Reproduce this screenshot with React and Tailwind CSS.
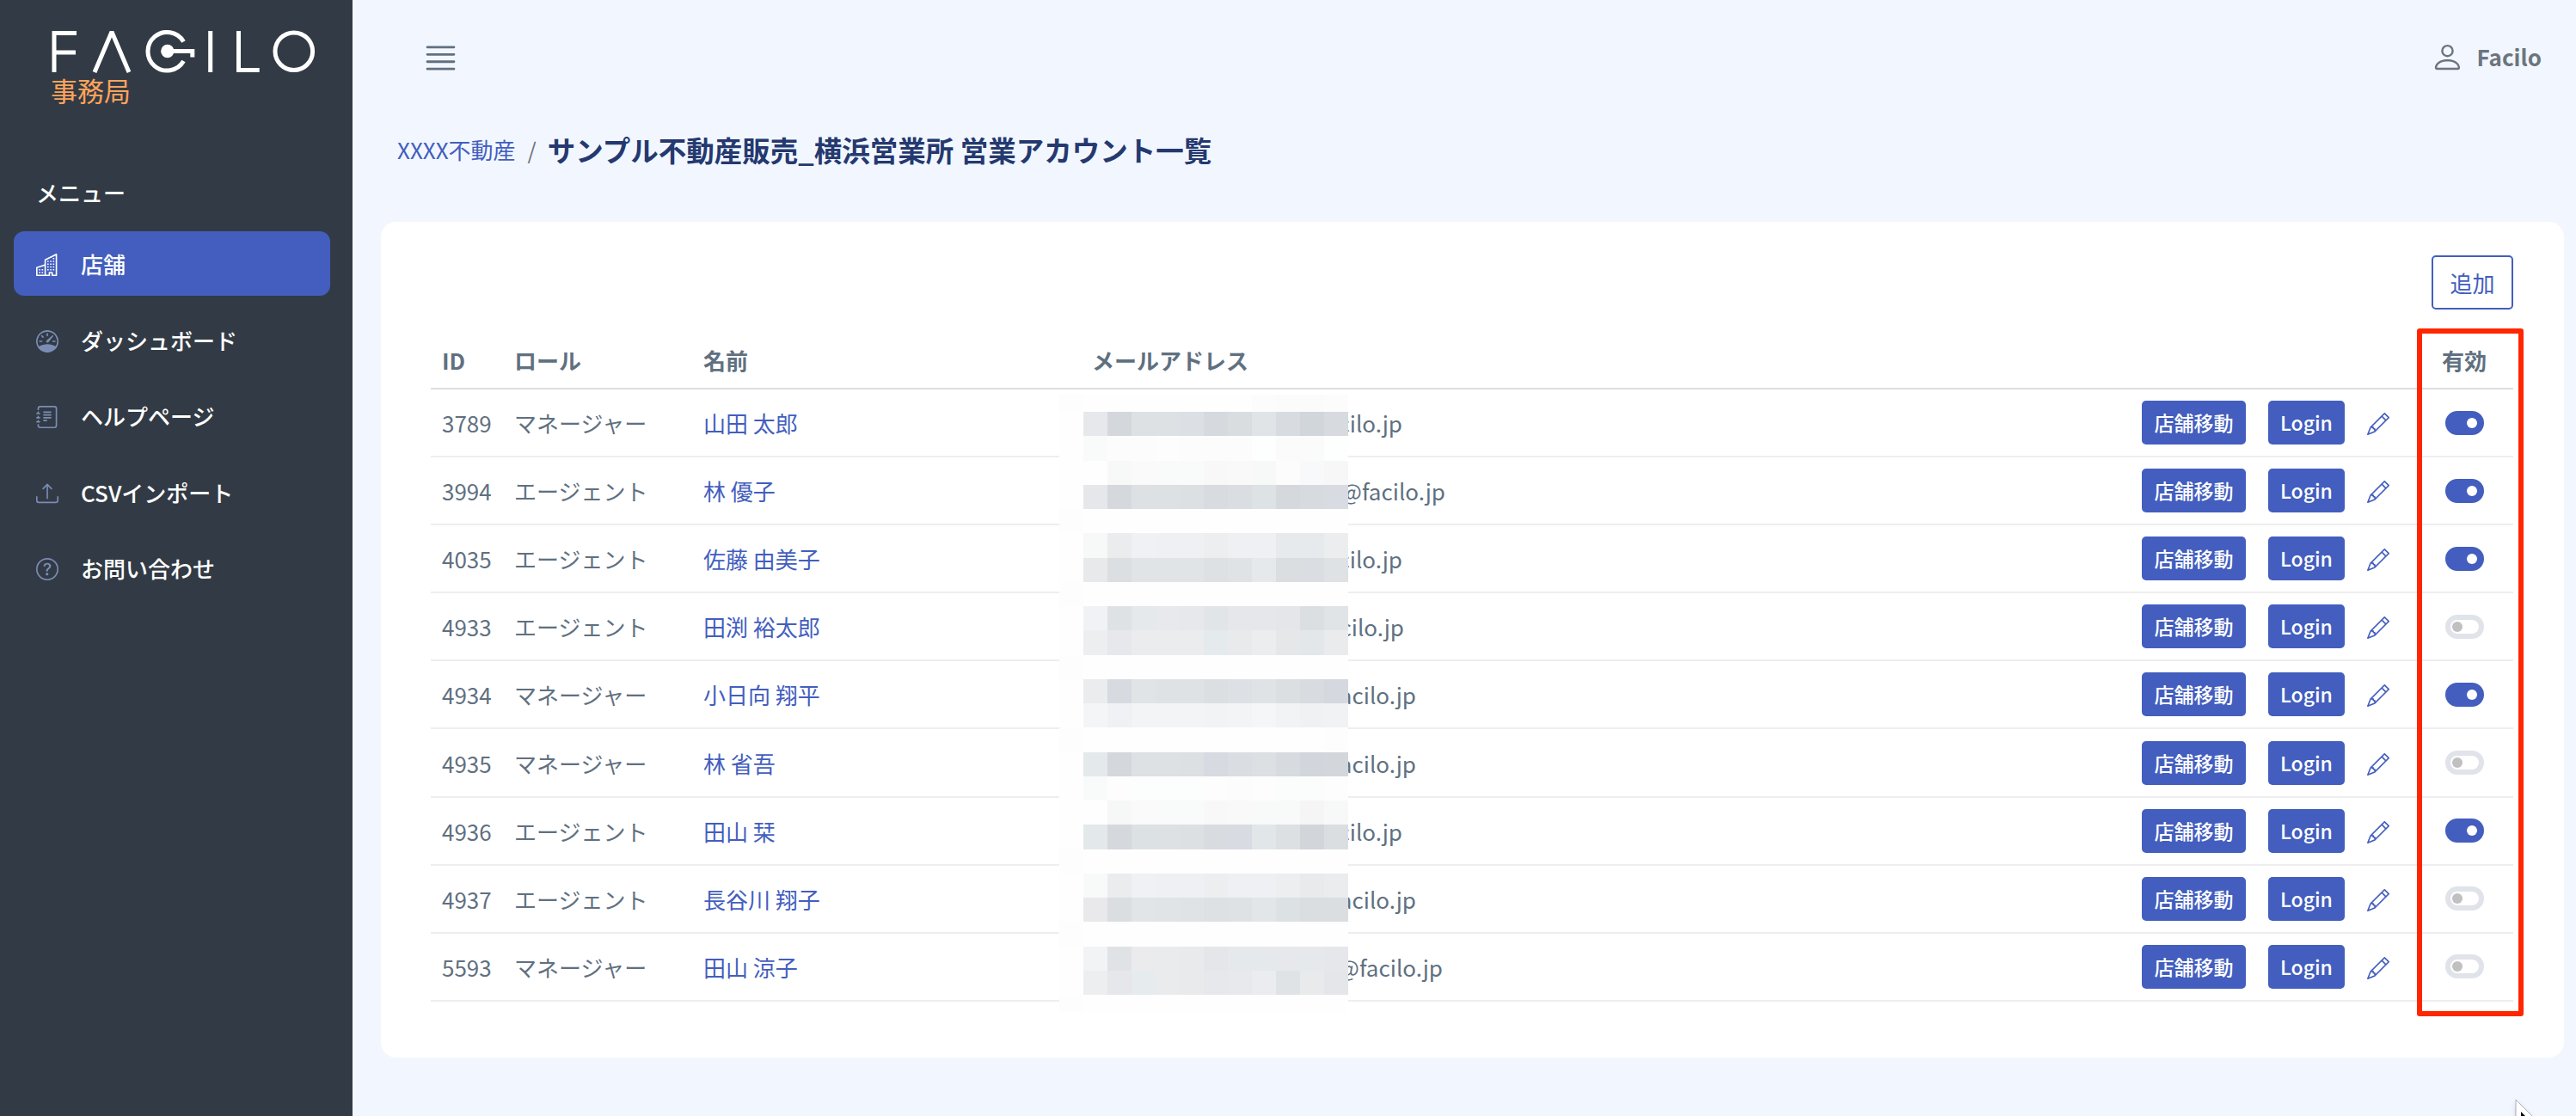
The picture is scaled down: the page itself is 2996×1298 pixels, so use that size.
import React, { useState } from "react";
import {
  BsBuildings,
  BsJournalText,
  BsJustify,
  BsPencil,
  BsPerson,
  BsQuestionCircle,
  BsSpeedometer,
  BsUpload,
} from "react-icons/bs";

const MENU = [
  { label: "店舗", icon: BsBuildings, active: true },
  { label: "ダッシュボード", icon: BsSpeedometer },
  { label: "ヘルプページ", icon: BsJournalText },
  { label: "CSVインポート", icon: BsUpload },
  { label: "お問い合わせ", icon: BsQuestionCircle },
];

// mailWidth: where the address ends inside its column
const ACCOUNTS = [
  { id: 3789, role: "マネージャー", name: "山田 太郎", mailWidth: 361, enabled: true },
  { id: 3994, role: "エージェント", name: "林 優子", mailWidth: 411, enabled: true },
  { id: 4035, role: "エージェント", name: "佐藤 由美子", mailWidth: 361, enabled: true },
  { id: 4933, role: "エージェント", name: "田渕 裕太郎", mailWidth: 363, enabled: false },
  { id: 4934, role: "マネージャー", name: "小日向 翔平", mailWidth: 377, enabled: true },
  { id: 4935, role: "マネージャー", name: "林 省吾", mailWidth: 377, enabled: false },
  { id: 4936, role: "エージェント", name: "田山 栞", mailWidth: 361, enabled: true },
  { id: 4937, role: "エージェント", name: "長谷川 翔子", mailWidth: 377, enabled: false },
  { id: 5593, role: "マネージャー", name: "田山 涼子", mailWidth: 408, enabled: false },
];

const MOSAIC = [
  "fdfdfd fefefe fefefe fefefe fefefe fefefe fefefe fefefe fcfcfc fbfbfb fbfbfb fcfcfc",
  "fefefe e7e8ec d4d8dd dde1e4 dde1e4 dce0e4 d6dadf d9dde0 e0e4e7 d8dce1 d1d6da d7dadf",
  "fefefe f9fbfa fcfcfc fcfcfc fdfdfd fcfcfc fcfcfc fcfcfc fdfefe fbfbfb fbfbfb fdfefe",
  "fefefe fefefe f7f9f8 fafafa f9fbfa f9fbfa f8f8f8 f9f9f9 f7f9f8 fcfcfc f8f9fb f7f7f7",
  "fefefe e5e7eb d5d8dd dde1e4 dde1e4 dce0e3 d8dbe0 dadde1 dde2e4 d5d8dd d7dbe0 d8dbe1",
  "fdfdfd fefefe fefefe fefefe fefefe fefefe fefefe fefefe fefefe fefefe fefefe fefefe",
  "fefefe f7f9f8 ebecee f0f1f4 eff0f3 eff0f3 edeef0 eff0f3 eff0f3 e6eaed e6eaed ecedef",
  "fefefe e8e9ea dbdfe1 e1e4e7 e1e4e7 e0e4e6 dde1e3 dfe3e5 e5e9ec dadee0 dadde1 dfe2e5",
  "fdfdfd fefefe fefefe fefefe fefefe fefefe fefefe fefefe fefefe fefefe fefefe fefefe",
  "fefefe f1f2f5 dee2e5 e5e9ec e8e9ed e7e8ec e1e5e8 e6e7eb e6e7eb e5e6ea dbdfe2 e0e4e7",
  "fefefe edeef0 e7e8ec ebecee ebecee ebecee e5eaed e9eaec ecedee e6e7e9 e3e7ea eaebed",
  "fdfdfd fefefe fefefe fefefe fefefe fefefe fefefe fefefe fefefe fefefe fefefe fefefe",
  "fefefe ebecee d7dae0 e0e4e7 dee2e5 dee2e5 dbdfe1 dde1e5 dfe3e6 dbdfe1 d8dbe0 d5d8de",
  "fefefe f4f5f7 f0f1f4 f3f4f6 f3f4f6 f3f4f6 f2f3f5 f3f4f6 f5f6f8 f2f3f5 f0f1f3 f1f2f4",
  "fdfdfd fefefe fefefe fefefe fefefe fefefe fefefe fefefe fefefe fefefe fefefe fdfdfd",
  "fefefe e4e9eb d4d7dc dde1e4 dde1e4 dce0e2 d7dae0 dadde2 dce0e3 d7dbe0 d2d5db d3d6db",
  "fefefe f9fbfa fdfdfd fcfdfd fcfdfd fcfdfd fdfdfd fdfcfc fdfdfd fbfdfc fbfdfc fdfdfd",
  "fefefe fefefe f6f8f7 fafafa f9fbfa f9fbfa f8f8f8 f9f9f9 f8faf9 f8faf9 f5f5f5 f7f9f8",
  "fefefe e3e8ea d5d8dd dce1e3 dde1e4 dce0e3 d8dbe0 d8dbe1 e1e6e8 dce0e3 d2d5da dadee0",
  "fdfdfd fefefe fefefe fefefe fefefe fefefe fefefe fefefe fefefe fefefe fefefe fefefe",
  "fefefe f8faf9 ebecee f0f1f4 eff0f3 eff0f3 edeef0 eff0f3 eff0f3 edeef0 e9eaec ebecee",
  "fefefe e9e9eb dadee0 e1e5e8 e0e4e7 dfe3e5 dde1e3 dee2e5 e2e6e9 dce1e3 dadee0 dadee0",
  "fdfdfd fefefe fefefe fefefe fefefe fefefe fefefe fefefe fefefe fefefe fefefe fefefe",
  "fefefe f1f3f5 dfe3e6 ebebed eaebed e9eaec e5e6ea e5e9ec e5e9ec e7e8ec e5e9ec e5e7eb",
  "fefefe eceef0 e5e7ea e6ebee eaebed e9eaeb e7e8ec e8e9ed ebecef dfe3e5 e9eaeb e4e6ea",
  "fdfdfd fefefe fefefe fefefe fefefe fefefe fefefe fefefe fefefe fefefe fefefe fefefe",
];

const Logo = () => (
  <svg width="307" height="50" viewBox="0 0 307 50" fill="none" stroke="white" strokeWidth="5">
    <path d="M3 49V3.5H29M3 26H28" />
    <path d="M50 49L70 2L90 49" strokeLinejoin="bevel" />
    <path d="M153.500 13.500A22.300 22.300 0 1 0 153.500 36" />
    <circle cx="134.800" cy="24.500" r="7.700" fill="white" stroke="none" />
    <path d="M135 24.500H163.800V31.500" />
    <path d="M184.700 1V49M217.500 1V46.500H241.700" />
    <circle cx="281.800" cy="24.700" r="21.800" />
  </svg>
);

const Cursor = () => (
  <svg width="40" height="60" viewBox="0 0 40 60" className="drop-shadow-md">
    <path d="M1 1V44L11 35L18 50L26 47L19 32H32Z" fill="white" stroke="#9a9da3" strokeWidth="0.800" />
    <path d="M7 15V34L12 29L19 43L20 42L14 28H20Z" fill="black" />
  </svg>
);

const Sidebar = () => (
  <aside className="w-[410px] h-full shrink-0 bg-[#323b45] text-white">
    <div className="pl-[60px] pt-[35px] h-[204px]">
      <Logo />
      <div className="-ml-px text-[31px] leading-[40px] text-[#ffa35c]">事務局</div>
    </div>
    <div className="pl-[42px] h-[65px] text-[26px] leading-[40px] font-medium">メニュー</div>
    <nav className="flex flex-col gap-[13.5px] pl-4 pr-[26px]">
      {MENU.map(({ label, icon: Icon, active }) => (
        <a
          key={label}
          className={`flex items-center h-[75px] rounded-xl pl-[26px] gap-[26px] text-[26px] font-medium ${
            active ? "bg-[#435ebe]" : ""
          }`}
        >
          <Icon size={26} className={active ? "text-white mt-[3px]" : "text-[#7c8db5] mt-[3px]"} />
          <span>{label}</span>
        </a>
      ))}
    </nav>
  </aside>
);

const Toggle = ({ checked, onChange }) => (
  <button
    type="button"
    role="switch"
    aria-checked={checked}
    onClick={onChange}
    className={`flex items-center w-[45px] h-[28px] rounded-full border-[6px] px-[2px] ${
      checked ? "justify-end bg-[#435ebe] border-[#435ebe]" : "justify-start bg-white border-[#e0e3ea]"
    }`}
  >
    <span className={`size-3 rounded-full ${checked ? "bg-white" : "bg-[#c0c0c0]"}`} />
  </button>
);

const Mosaic = () => (
  <div className="absolute left-[731px] top-[6px] w-[336px] h-[718px] grid grid-cols-12 grid-rows-[20px_repeat(24,28.25px)_20px]">
    {MOSAIC.flatMap((line, y) =>
      line.split(" ").map((color, x) => (
        <div key={`${y}-${x}`} style={{ backgroundColor: `#${color}` }} />
      ))
    )}
  </div>
);

const COLUMNS = "grid grid-cols-[84px_220px_452px_1221px_147px_115px_91px_78px] items-center pl-[13px]";

const AccountTable = () => {
  const [accounts, setAccounts] = useState(ACCOUNTS);

  const toggle = (id) => {
    setAccounts((prev) =>
      prev.map((a) => (a.id === id ? { ...a, enabled: !a.enabled } : a))
    );
  };

  return (
    <div>
      <div className={`${COLUMNS} h-[67px] border-b-2 border-[#dedede] font-bold`}>
        <div>ID</div>
        <div>ロール</div>
        <div>名前</div>
        <div>メールアドレス</div>
        <div />
        <div />
        <div />
        <div className="-ml-1">有効</div>
      </div>
      <div className="relative">
        {accounts.map((a) => (
          <div key={a.id} className={`${COLUMNS} h-[79.1px] border-b-2 border-[#eeeeee]`}>
            <div>{a.id}</div>
            <div>{a.role}</div>
            <div className="text-[#435ebe]">{a.name}</div>
            <div className="text-right" style={{ width: a.mailWidth }}>
              @facilo.jp
            </div>
            <div>
              <button className="w-[121px] h-[51px] rounded-[5px] bg-[#435ebe] text-white text-[23px] font-medium">
                店舗移動
              </button>
            </div>
            <div>
              <button className="w-[89px] h-[51px] rounded-[5px] bg-[#435ebe] text-white text-[23px] font-medium">
                Login
              </button>
            </div>
            <BsPencil size={26} className="mt-[3px] text-[#435ebe]" />
            <Toggle checked={a.enabled} onChange={() => toggle(a.id)} />
          </div>
        ))}
        <Mosaic />
      </div>
    </div>
  );
};

export default function App() {
  return (
    <div className="relative flex w-[2996px] h-[1298px] overflow-hidden bg-[#f2f7ff] text-[26px] leading-[39px] text-[#607080] font-['Noto_Sans_CJK_JP',sans-serif]">
      <Sidebar />
      <main className="flex-1 min-w-0 pl-[33px] pr-[14px]">
        {/* Header */}
        <header className="flex items-center justify-between h-[134px] pl-[47px] pr-[26px]">
          <BsJustify size={45} />
          <div className="flex items-center gap-[14px] pb-[4px] text-[#6c757d]">
            <BsPerson size={39} className="mt-[2px]" />
            <span className="font-bold">Facilo</span>
          </div>
        </header>

        {/* Breadcrumb */}
        <div className="flex items-center h-[124px] pl-[19px] pb-[45px]">
          <a className="text-[#435ebe]">XXXX不動産</a>
          <span className="pl-[14px] pr-[13px] text-[#6c757d]">/</span>
          <h1 className="text-[32.5px] font-bold text-[#25396f]">
            サンプル不動産販売_横浜営業所 営業アカウント一覧
          </h1>
        </div>

        {/* Accounts */}
        <section className="h-[972px] rounded-[18px] bg-white pt-[39px] pl-[58px] pr-[59px]">
          <div className="flex justify-end h-[89px]">
            <button className="w-[95px] h-[63px] rounded-[5px] border-2 border-[#435ebe] text-[#435ebe]">
              追加
            </button>
          </div>
          <AccountTable />
        </section>
      </main>

      <div className="absolute left-[2811px] top-[382px] w-[124px] h-[800px] rounded-[3px] border-[6px] border-[#ff2600]" />
      <div className="absolute left-[2925px] top-[1278px]">
        <Cursor />
      </div>
    </div>
  );
}
